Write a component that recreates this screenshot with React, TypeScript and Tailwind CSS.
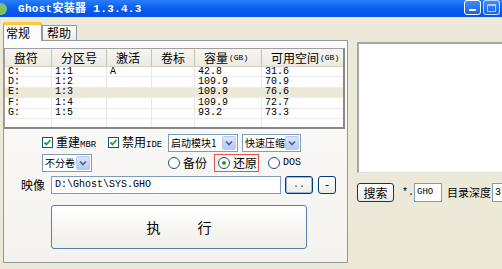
import React from 'react';

const cjk = { fontFamily: '"Noto Sans CJK SC", "DejaVu Sans", sans-serif' };
const mono = { fontFamily: '"Liberation Mono", "Noto Sans CJK SC", monospace' };

const cols = [47, 55, 45, 43, 67, 83];
const headers = ['盘符', '分区号', '激活', '卷标', '容量', '可用空间'];
const rows = [
  ['C:', '1:1', 'A', '', '42.8', '31.6'],
  ['D:', '1:2', '', '', '109.9', '70.9'],
  ['E:', '1:3', '', '', '109.9', '76.6'],
  ['F:', '1:4', '', '', '109.9', '72.7'],
  ['G:', '1:5', '', '', '93.2', '73.3'],
  ['', '', '', '', '', ''],
];

const Check = ({ label }: { label: string }) => (
  <div className="flex items-center gap-[3px] whitespace-nowrap">
    <div className="w-[11px] h-[11px] border border-[#1c5180] bg-white flex items-center justify-center shrink-0">
      <svg width="9" height="9" viewBox="0 0 9 9">
        <path d="M1.5 4.5 L3.5 6.5 L7.5 2" stroke="#21a121" strokeWidth="1.8" fill="none" />
      </svg>
    </div>
    <span className="text-[12px] leading-none" style={cjk}>
      {label.replace(/[A-Z]+$/, '')}
      <span className="text-[9px]" style={mono}>{label.match(/[A-Z]+$/)?.[0]}</span>
    </span>
  </div>
);

const Select = ({ label, w }: { label: string; w: string }) => (
  <div className={`${w} h-[18px] border border-[#7f9db9] bg-white flex items-center justify-between pl-[2px] pr-px shrink-0`}>
    <span className="text-[10px] leading-none whitespace-nowrap" style={cjk}>{label}</span>
    <div className="w-[14px] h-[14px] shrink-0 rounded-[2px] bg-gradient-to-b from-[#dbe6fd] to-[#b5c9f7] border border-[#b6c8f3] flex items-center justify-center">
      <svg width="8" height="6" viewBox="0 0 8 6">
        <path d="M1 1.5 L4 4.5 L7 1.5" stroke="#4d6185" strokeWidth="1.6" fill="none" />
      </svg>
    </div>
  </div>
);

const Radio = ({ label, on }: { label: string; on?: boolean }) => (
  <div className="flex items-center gap-[3px] whitespace-nowrap">
    <div className="w-[12px] h-[12px] shrink-0 rounded-full border border-[#1c5180] bg-white flex items-center justify-center">
      {on && <div className="w-[4px] h-[4px] rounded-full bg-[#21a121]" />}
    </div>
    {label === 'DOS' ? (
      <span className="text-[10px] leading-none" style={mono}>{label}</span>
    ) : (
      <span className="text-[12px] leading-none" style={cjk}>{label}</span>
    )}
  </div>
);

const XpButton = ({ children, className }: { children: React.ReactNode; className: string }) => (
  <div className={`border border-[#003c74] rounded-[3px] bg-gradient-to-b from-white to-[#ecebe6] flex items-center justify-center shrink-0 ${className}`}>
    {children}
  </div>
);

export default function App() {
  return (
    <div className="w-[502px] h-[269px] bg-[#ece9d8] overflow-hidden flex flex-col">
      {/* title bar */}
      <div className="h-[17px] bg-gradient-to-b from-[#2a7dfa] via-[#0a5cf0] to-[#0452e6] flex items-center justify-between shrink-0">
        <div className="flex items-center">
          <div className="w-[7px] h-[12px] rounded-r-full bg-[#7fc060] mr-[11px]" />
          <span className="text-white text-[11px] font-bold leading-none tracking-[0.3px] whitespace-nowrap" style={mono}>
            Ghost<span style={cjk} className="text-[11px]">安装器</span> 1.3.4.3
          </span>
        </div>
        <div className="flex gap-[2px] pr-[2px] self-start">
          <div className="w-[17px] h-[15px] rounded-[3px] border border-white bg-gradient-to-b from-[#3d8cfa] to-[#1f62e6] flex items-end justify-center pb-[3px]">
            <div className="w-[7px] h-[2px] bg-white" />
          </div>
          <div className="w-[17px] h-[15px] rounded-[3px] border border-white/70 bg-gradient-to-b from-[#3d8cfa] to-[#1f62e6] flex items-center justify-center">
            <div className="w-[9px] h-[8px] border border-white/60 border-t-2" />
          </div>
        </div>
      </div>

      <div className="flex flex-1">
        {/* left tab area */}
        <div className="w-[348px] shrink-0 pl-[3px] flex flex-col">
          <div className="h-[23px] flex items-end">
            <div className="w-[39px] h-[19px] bg-[#fcfcfe] border border-[#919b9c] border-b-0 border-t-[3px] border-t-[#ffc83c] rounded-t-[2px] flex items-center pl-[2px] relative top-px z-10">
              <span className="text-[12px] leading-none" style={cjk}>常规</span>
            </div>
            <div className="w-[35px] h-[15px] bg-gradient-to-b from-white to-[#ecebe6] border border-[#919b9c] border-b-0 flex items-center pl-[4px]">
              <span className="text-[12px] leading-none" style={cjk}>帮助</span>
            </div>
          </div>
          <div className="h-[223px] border border-[#919b9c] bg-gradient-to-b from-[#fcfcfe] to-[#f4f3ee] flex flex-col">
            {/* list view */}
            <div className="mt-[7px] w-[341px] h-[81px] border border-[#a0a0a0] border-r-2 border-b-2 border-r-[#888] border-b-[#888] bg-white overflow-hidden">
              <div className="h-[18px] flex bg-gradient-to-b from-[#f6f5f0] to-[#ebeae4] border-b border-[#d6d2c2]">
                {headers.map((h, i) => (
                  <div
                    key={i}
                    style={{ width: cols[i] }}
                    className="h-full flex items-center pl-[9px] border-r border-[#c7c5b2] shrink-0 whitespace-nowrap"
                  >
                    <span className="text-[12px] leading-none" style={cjk}>{h}</span>
                    {i >= 4 && <span className="text-[8px] ml-[1px]" style={mono}>(GB)</span>}
                  </div>
                ))}
              </div>
              {rows.map((r, ri) => (
                <div
                  key={ri}
                  className={`h-[10.4px] flex border-b border-[#ebebeb] ${ri === 2 ? 'bg-[#ece9d8]' : ''}`}
                >
                  {r.map((c, ci) => (
                    <div
                      key={ci}
                      style={{ width: cols[ci] }}
                      className="h-full flex items-center pl-[3px] border-r border-[#e8e8e8] shrink-0"
                    >
                      <span className="text-[10px] leading-none" style={mono}>{c}</span>
                    </div>
                  ))}
                </div>
              ))}
            </div>

            {/* options row 1 */}
            <div className="mt-[5px] h-[17px] flex items-center pl-[38px]">
              <div className="w-[66px] shrink-0"><Check label="重建MBR" /></div>
              <div className="w-[60px] shrink-0"><Check label="禁用IDE" /></div>
              <Select label="启动模块1" w="w-[70px]" />
              <div className="w-[4px] shrink-0" />
              <Select label="快速压缩" w="w-[59px]" />
            </div>

            {/* options row 2 */}
            <div className="mt-[2px] h-[19px] flex items-center pl-[38px]">
              <Select label="不分卷" w="w-[50px]" />
              <div className="w-[76px] shrink-0" />
              <div className="w-[46px] shrink-0"><Radio label="备份" /></div>
              <div className="w-[45px] h-[18px] shrink-0 border border-[#e8504a] flex items-center pl-[3px]">
                <Radio label="还原" on />
              </div>
              <div className="w-[9px] shrink-0" />
              <Radio label="DOS" />
            </div>

            {/* image path */}
            <div className="mt-[4px] h-[18px] flex items-center pl-[17px]">
              <span className="w-[30px] shrink-0 text-[12px] leading-none" style={cjk}>映像</span>
              <div className="w-[230px] h-[18px] shrink-0 border border-[#7f9db9] bg-white flex items-center pl-[3px]">
                <span className="text-[10px] leading-none" style={mono}>D:\Ghost\SYS.GHO</span>
              </div>
              <XpButton className="ml-[4px] w-[28px] h-[18px] shadow-[inset_0_0_0_1px_#98b8ea]">
                <span className="text-[10px] leading-none text-[#444]" style={mono}>..</span>
              </XpButton>
              <XpButton className="ml-[5px] w-[18px] h-[18px]">
                <span className="text-[11px] leading-none" style={mono}>-</span>
              </XpButton>
            </div>

            {/* execute */}
            <div className="mt-[11px] ml-[47px] w-[256px] h-[44px] border border-[#5a7ea8] rounded-[3px] bg-gradient-to-b from-white to-[#efeee8] flex items-center justify-center gap-[37px]">
              <span className="text-[14px] leading-none" style={cjk}>执</span>
              <span className="text-[14px] leading-none" style={cjk}>行</span>
            </div>
          </div>
        </div>

        {/* right side */}
        <div className="flex-1 pl-[9px] flex flex-col">
          <div className="mt-[25px] h-[131px] bg-white border-t-2 border-l-2 border-[#a7a6a0] border-r border-b border-r-[#e0dfd8] border-b-[#e0dfd8]" />
          <div className="mt-[10px] h-[19px] flex items-center">
            <XpButton className="w-[37px] h-[19px]">
              <span className="text-[12px] leading-none" style={cjk}>搜索</span>
            </XpButton>
            <span className="ml-[8px] w-[12px] shrink-0 text-[10px] leading-none" style={mono}>*.</span>
            <div className="w-[28px] h-[19px] shrink-0 border border-[#7f9db9] bg-white flex items-center pl-[2px]">
              <span className="text-[9px] leading-none" style={mono}>GHO</span>
            </div>
            <span className="ml-[5px] w-[44px] shrink-0 text-[11px] leading-none whitespace-nowrap" style={cjk}>目录深度</span>
            <div className="ml-[1px] w-[20px] h-[19px] border border-[#7f9db9] bg-white flex items-center pl-[2px] shrink-0">
              <span className="text-[10px] leading-none" style={mono}>3</span>
            </div>
          </div>
        </div>
      </div>
    </div>
  );
}
